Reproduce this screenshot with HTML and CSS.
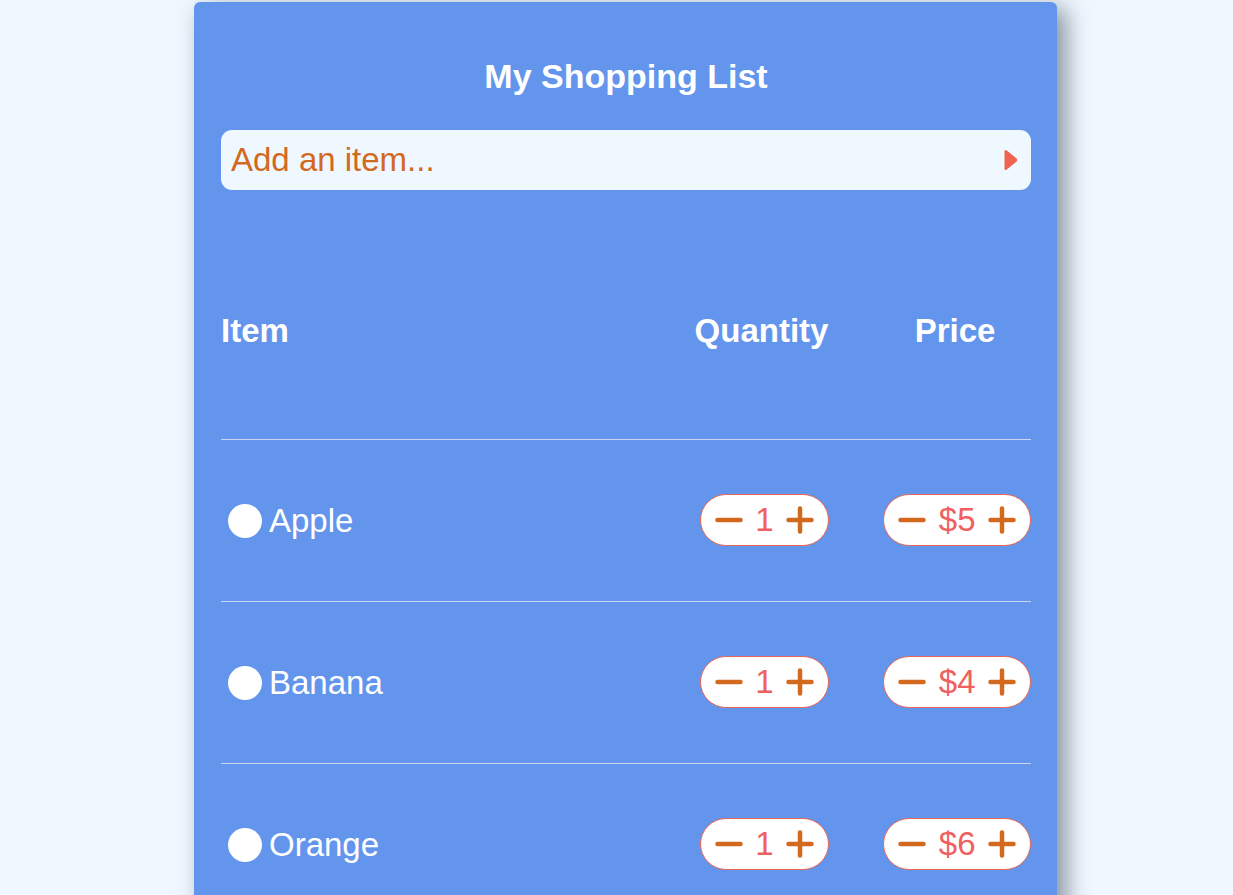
FILE: index.html
```html
<!DOCTYPE html>
<html lang="en">
<head>
<meta charset="utf-8">
<title>My Shopping List</title>
<link rel="stylesheet" href="styles.css">
</head>
<body>
<div class="card">
  <h1 class="title">My Shopping List</h1>
  <form class="add-form" onsubmit="return false">
    <input class="add-input" type="text" placeholder="Add an item...">
    <button class="add-btn" type="button" aria-label="Add">
      <svg width="14" height="22" viewBox="0 0 14 22"><path d="M0.5 2.5 Q0.5 0 2.8 1.4 L12.6 9.6 Q13.8 11 12.6 12.4 L2.8 20.6 Q0.5 22 0.5 19.5 Z" fill="#ef6351"/></svg>
    </button>
  </form>

  <div class="list">
    <div class="row head">
      <div class="c-item">Item</div>
      <div class="c-qty">Quantity</div>
      <div class="c-price">Price</div>
    </div>

    <div class="row entry">
      <div class="c-item"><span class="dot"></span><span class="name">Apple</span></div>
      <div class="c-qty">
        <div class="stepper qty">
          <svg class="ic" width="28" height="28" viewBox="0 0 28 28"><path d="M2.5 14 H25.5" /></svg>
          <span class="val">1</span>
          <svg class="ic" width="28" height="28" viewBox="0 0 28 28"><path d="M2.5 14 H25.5 M14 2.5 V25.5" /></svg>
        </div>
      </div>
      <div class="c-price">
        <div class="stepper price">
          <svg class="ic" width="28" height="28" viewBox="0 0 28 28"><path d="M2.5 14 H25.5" /></svg>
          <span class="val">$5</span>
          <svg class="ic" width="28" height="28" viewBox="0 0 28 28"><path d="M2.5 14 H25.5 M14 2.5 V25.5" /></svg>
        </div>
      </div>
    </div>

    <div class="row entry">
      <div class="c-item"><span class="dot"></span><span class="name">Banana</span></div>
      <div class="c-qty">
        <div class="stepper qty">
          <svg class="ic" width="28" height="28" viewBox="0 0 28 28"><path d="M2.5 14 H25.5" /></svg>
          <span class="val">1</span>
          <svg class="ic" width="28" height="28" viewBox="0 0 28 28"><path d="M2.5 14 H25.5 M14 2.5 V25.5" /></svg>
        </div>
      </div>
      <div class="c-price">
        <div class="stepper price">
          <svg class="ic" width="28" height="28" viewBox="0 0 28 28"><path d="M2.5 14 H25.5" /></svg>
          <span class="val">$4</span>
          <svg class="ic" width="28" height="28" viewBox="0 0 28 28"><path d="M2.5 14 H25.5 M14 2.5 V25.5" /></svg>
        </div>
      </div>
    </div>

    <div class="row entry">
      <div class="c-item"><span class="dot"></span><span class="name">Orange</span></div>
      <div class="c-qty">
        <div class="stepper qty">
          <svg class="ic" width="28" height="28" viewBox="0 0 28 28"><path d="M2.5 14 H25.5" /></svg>
          <span class="val">1</span>
          <svg class="ic" width="28" height="28" viewBox="0 0 28 28"><path d="M2.5 14 H25.5 M14 2.5 V25.5" /></svg>
        </div>
      </div>
      <div class="c-price">
        <div class="stepper price">
          <svg class="ic" width="28" height="28" viewBox="0 0 28 28"><path d="M2.5 14 H25.5" /></svg>
          <span class="val">$6</span>
          <svg class="ic" width="28" height="28" viewBox="0 0 28 28"><path d="M2.5 14 H25.5 M14 2.5 V25.5" /></svg>
        </div>
      </div>
    </div>
  </div>
</div>
</body>
</html>
```
FILE: styles.css
```css
* { box-sizing: border-box; }

html, body {
  margin: 0;
  padding: 0;
  background: #f0f8ff;
  font-family: "Liberation Sans", Arial, sans-serif;
}

body {
  padding-top: 2px;
}

.card {
  width: 863px;
  margin-left: 194px;
  background: #6495ed;
  border-radius: 6px;
  padding: 52px 26px 80px 27px;
  box-shadow: 9px 6px 24px rgba(30, 40, 60, 0.5);
}

.title {
  margin: 0;
  height: 44px;
  line-height: 44px;
  text-align: center;
  color: #ffffff;
  font-size: 34px;
  font-weight: bold;
}

.add-form {
  margin-top: 32px;
  height: 60px;
  display: flex;
  align-items: center;
  background: #f0f8ff;
  border-radius: 11px;
  padding: 0 13px 0 10px;
}

.add-input {
  flex: 1;
  border: none;
  outline: none;
  background: transparent;
  font-family: "Liberation Sans", Arial, sans-serif;
  font-size: 33px;
  color: #d2691e;
  padding: 0;
  height: 60px;
}

.add-input::placeholder {
  color: #d2691e;
  opacity: 1;
}

.add-btn {
  border: none;
  background: transparent;
  padding: 0;
  width: 14px;
  height: 22px;
  display: flex;
  cursor: pointer;
}

.list {
  margin-top: 33px;
}

.row {
  display: grid;
  grid-template-columns: 1fr 135px 148px;
  column-gap: 54px;
  align-items: center;
  color: #ffffff;
}

.row > div:first-child {
  margin-right: -54px;
}

.head {
  height: 216px;
  font-size: 33px;
  font-weight: bold;
}

.head .c-qty,
.head .c-price {
  text-align: center;
}

.head .c-price {
  padding-right: 4px;
}

.entry {
  height: 162px;
  border-top: 1px solid #cdd5f4;
  font-size: 33px;
}

.c-item {
  display: flex;
  align-items: center;
}

.entry .c-item {
  padding-left: 7px;
  gap: 7px;
}

.dot {
  width: 34px;
  height: 34px;
  border-radius: 50%;
  background: #ffffff;
  flex: none;
}

.entry .c-qty {
  display: flex;
  justify-content: flex-end;
}

.entry .c-price {
  display: flex;
  justify-content: flex-end;
}

.stepper {
  display: flex;
  align-items: center;
  gap: 12.5px;
  height: 52px;
  margin-top: -2px;
  padding: 0 14px;
  background: #ffffff;
  border: 1px solid #ea6553;
  border-radius: 26px;
}

.val {
  color: #f0605e;
  font-size: 33px;
  line-height: 1;
}

.ic {
  flex: none;
  fill: none;
  stroke: #d2691e;
  stroke-width: 4.5;
  stroke-linecap: round;
}
```
